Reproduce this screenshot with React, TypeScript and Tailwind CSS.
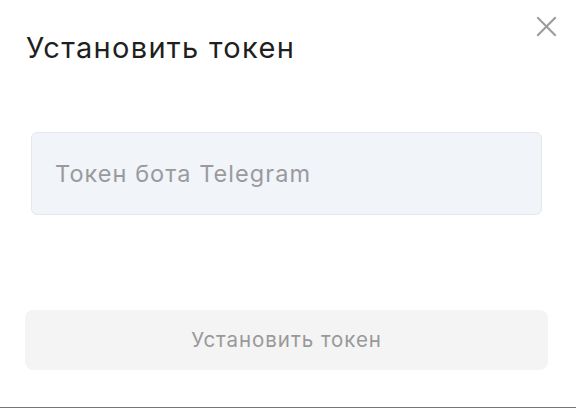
import React from "react";

export default function App() {
  return (
    <div
      className="relative flex h-[408px] w-[576px] flex-col border-b border-[#777777] bg-white"
      style={{ fontFamily: "Inter, 'Noto Sans', sans-serif" }}
    >
      <button className="absolute right-[18px] top-[14px] flex h-[24px] w-[24px] items-center justify-center text-[#9a9a9a]">
        <svg width="21" height="21" viewBox="0 0 21 21" fill="none" stroke="currentColor" strokeWidth="2" strokeLinecap="square">
          <line x1="2" y1="2" x2="19" y2="19" />
          <line x1="19" y1="2" x2="2" y2="19" />
        </svg>
      </button>
      <h1 className="ml-[26px] mt-[30px] text-[29px] leading-[36px] tracking-[1.3px] font-normal text-[#1f1f1f]">
        Установить токен
      </h1>
      <div className="ml-[31px] mt-[66px] flex h-[83px] w-[511px] items-center rounded-md border border-[#e4e7ec] bg-[#f1f4f9] pl-[23px]">
        <span className="pt-[1px] text-[23.5px] tracking-[1.05px] text-[#9a9a9e]">Токен бота Telegram</span>
      </div>
      <div className="ml-[25px] mt-[95px] flex h-[60px] w-[523px] items-center justify-center rounded-lg bg-[#f4f4f4]">
        <span className="text-[20.5px] tracking-[0.95px] text-[#999999]">Установить токен</span>
      </div>
    </div>
  );
}
